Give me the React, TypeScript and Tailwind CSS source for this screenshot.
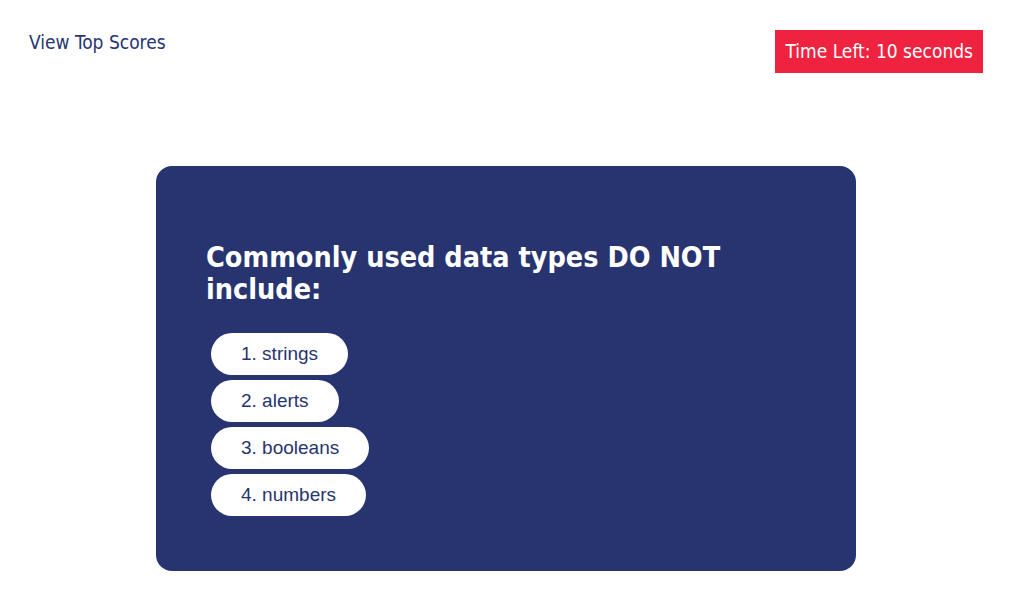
const CHOICES = ['1. strings', '2. alerts', '3. booleans', '4. numbers']

const TAHOMA = "font-['Tahoma','DejaVu_Sans_Condensed','DejaVu_Sans',sans-serif]"

export default function App() {
  return (
    <div className="min-h-screen bg-white">
      <header className={`flex items-start justify-between pl-[29px] pr-[30px] pt-[30px] ${TAHOMA}`}>
        <a href="#" className="mt-[1px] text-[19px] leading-[23px] text-[#283470]">
          View Top Scores
        </a>
        <div className="bg-[#ef2340] px-[10px] py-[9px] text-[19px] leading-[25px] text-white">
          Time Left: 10 seconds
        </div>
      </header>

      <main className="mt-[93px] flex justify-center pr-[1px]">
        <section className="h-[405px] w-[700px] rounded-[16px] bg-[#283470] px-[50px] pt-[76px]">
          <h1 className={`max-w-[540px] text-[28.5px] font-bold leading-[32px] text-white ${TAHOMA}`}>
            Commonly used data types DO NOT include:
          </h1>
          <ul className="mt-[27px] ml-[5px] flex flex-col items-start gap-[5px]">
            {CHOICES.map((c) => (
              <li key={c}>
                <button className="h-[42px] rounded-full bg-white px-[30px] font-['Liberation_Sans',Arial,sans-serif] text-[19px] text-[#283470]">
                  {c}
                </button>
              </li>
            ))}
          </ul>
        </section>
      </main>
    </div>
  )
}
